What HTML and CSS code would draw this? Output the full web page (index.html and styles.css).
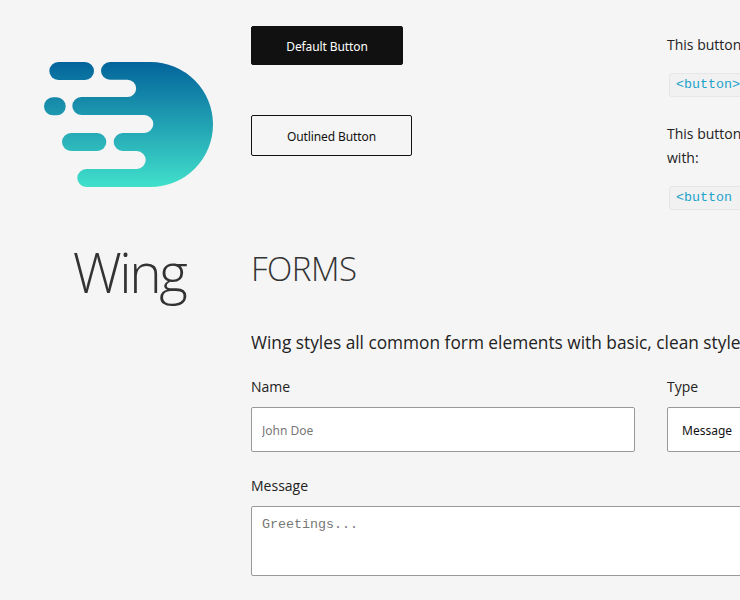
FILE: index.html
```html
<!DOCTYPE html>
<html lang="en">
<head>
    <meta charset="UTF-8">
    <meta name="viewport" content="width=device-width, initial-scale=1.0">
    <title>Wing</title>
    <link rel="stylesheet" href="styles.css">
</head>
<body>

    <div class="page">
        <!-- Sidebar -->
        <aside class="sidebar">
            <svg class="logo" width="219" height="150" viewBox="0 50 219 150">
                <defs>
                    <linearGradient id="wingGrad" gradientUnits="userSpaceOnUse" x1="0" y1="62" x2="0" y2="187">
                        <stop offset="0" stop-color="#03649b"/>
                        <stop offset="1" stop-color="#40e0cb"/>
                    </linearGradient>
                </defs>
                <g fill="url(#wingGrad)">
                    <path d="M101 71a9 9 0 0 1 9-9H150.500A62.500 62.500 0 0 1 150.500 187H86.300a9 9 0 0 1 0-18H136.700a9 9 0 0 0 0-18H122.700a9 9 0 0 1 0-18H144.300a9 9 0 0 0 0-18H81.300a9 9 0 0 1 0-18H127.500a8.600 8.600 0 0 0 0-17.300H110a9 9 0 0 1-9-9Z"/>
                    <rect x="49.300" y="62" width="44.700" height="18" rx="9"/>
                    <rect x="44" y="97.300" width="21.700" height="18" rx="9"/>
                    <rect x="62" y="133" width="44.300" height="18" rx="9"/>
                </g>
            </svg>
            <div class="brand">Wing</div>
        </aside>

        <main class="content">
            <!-- Buttons -->
            <section class="row">
                <div class="cell">
                    <button class="btn btn-default">Default Button</button>
                </div>
                <div class="cell">
                    <p class="note">This button</p>
                    <code class="snippet">&lt;button&gt;</code>
                </div>
            </section>
            <section class="row row-second">
                <div class="cell">
                    <button class="btn btn-outline">Outlined Button</button>
                </div>
                <div class="cell">
                    <p class="note">This button<br>with:</p>
                    <code class="snippet">&lt;button</code>
                </div>
            </section>

            <!-- Forms -->
            <h2 class="title">FORMS</h2>
            <p class="lead">Wing styles all common form elements with basic, clean style</p>

            <form>
                <div class="row">
                    <div class="cell">
                        <label class="label" for="name">Name</label>
                        <input class="field" type="text" id="name" placeholder="John Doe">
                    </div>
                    <div class="cell">
                        <label class="label" for="type">Type</label>
                        <select class="field field-select" id="type">
                            <option>Message</option>
                        </select>
                    </div>
                </div>
                <label class="label label-message" for="message">Message</label>
                <textarea class="area" id="message" placeholder="Greetings..."></textarea>
            </form>
        </main>
    </div>

</body>
</html>
```

FILE: styles.css
```css
html, body { margin: 0; height: 600px; overflow: hidden; }
body { background: #f5f5f5; color: #222; font-family: "Open Sans", sans-serif; font-size: 14px; }

.page { display: flex; width: 1100px; }
.sidebar { width: 219px; flex: none; margin-right: 32px; padding-top: 50px; box-sizing: border-box; }
.logo { display: block; }
.brand { margin-top: 33px; width: 258px; text-align: center; font-size: 55px; font-weight: 300; letter-spacing: -2.5px; line-height: 78px; color: #333; }

.content { width: 800px; padding-top: 26px; }
.row { display: grid; grid-template-columns: 384px 384px; column-gap: 32px; }
.row-second { margin-top: 18px; }
.cell { min-width: 0; }

.btn { display: block; box-sizing: border-box; padding: 1px 0 0; border-radius: 2px; font-family: "Noto Sans", sans-serif; font-size: 12px; letter-spacing: -0.1px; }
.btn-default { width: 152px; height: 39px; background: #111; border: 1px solid #111; color: #fff; }
.btn-outline { width: 161px; height: 41px; background: transparent; border: 1px solid #111; color: #111; }

.note { margin: 0; font-size: 14px; line-height: 24px; color: #222; padding-top: 7px; white-space: nowrap; }
.snippet { display: inline-block; min-width: 100px; margin: 16px 0 0 2px; padding: 2px 6px; border: 1px solid #e6e6e6; border-radius: 3px; background: #f1f1f1; color: #1ba3cc; font-family: "Liberation Mono", monospace; font-size: 13.33px; line-height: 18px; white-space: nowrap; }

.title { margin: 34px 0 0; font-size: 33px; font-weight: 300; letter-spacing: -0.5px; line-height: 50px; color: #333; }
.lead { margin: 36px 0 0; font-size: 17.3px; line-height: 26px; white-space: nowrap; color: #222; }

form { margin-top: 19px; }
.label { display: block; font-size: 14px; line-height: 24px; color: #222; }
.label-message { margin-top: 22px; }
.field { display: block; box-sizing: border-box; width: 100%; height: 45px; margin-top: 8px; padding: 2px 10px 0; background: #fff; border: 1px solid #999; border-radius: 2px; font-family: "Noto Sans", sans-serif; font-size: 12px; }
.field::placeholder { color: #777; }
.field-select { padding-left: 14px; color: #111; appearance: none; }
.area { display: block; box-sizing: border-box; width: 800px; height: 70px; margin-top: 8px; padding: 10px; background: #fff; border: 1px solid #999; border-radius: 2px; font-family: "Liberation Mono", monospace; font-size: 13.33px; resize: none; }
.area::placeholder { color: #777; }
```
